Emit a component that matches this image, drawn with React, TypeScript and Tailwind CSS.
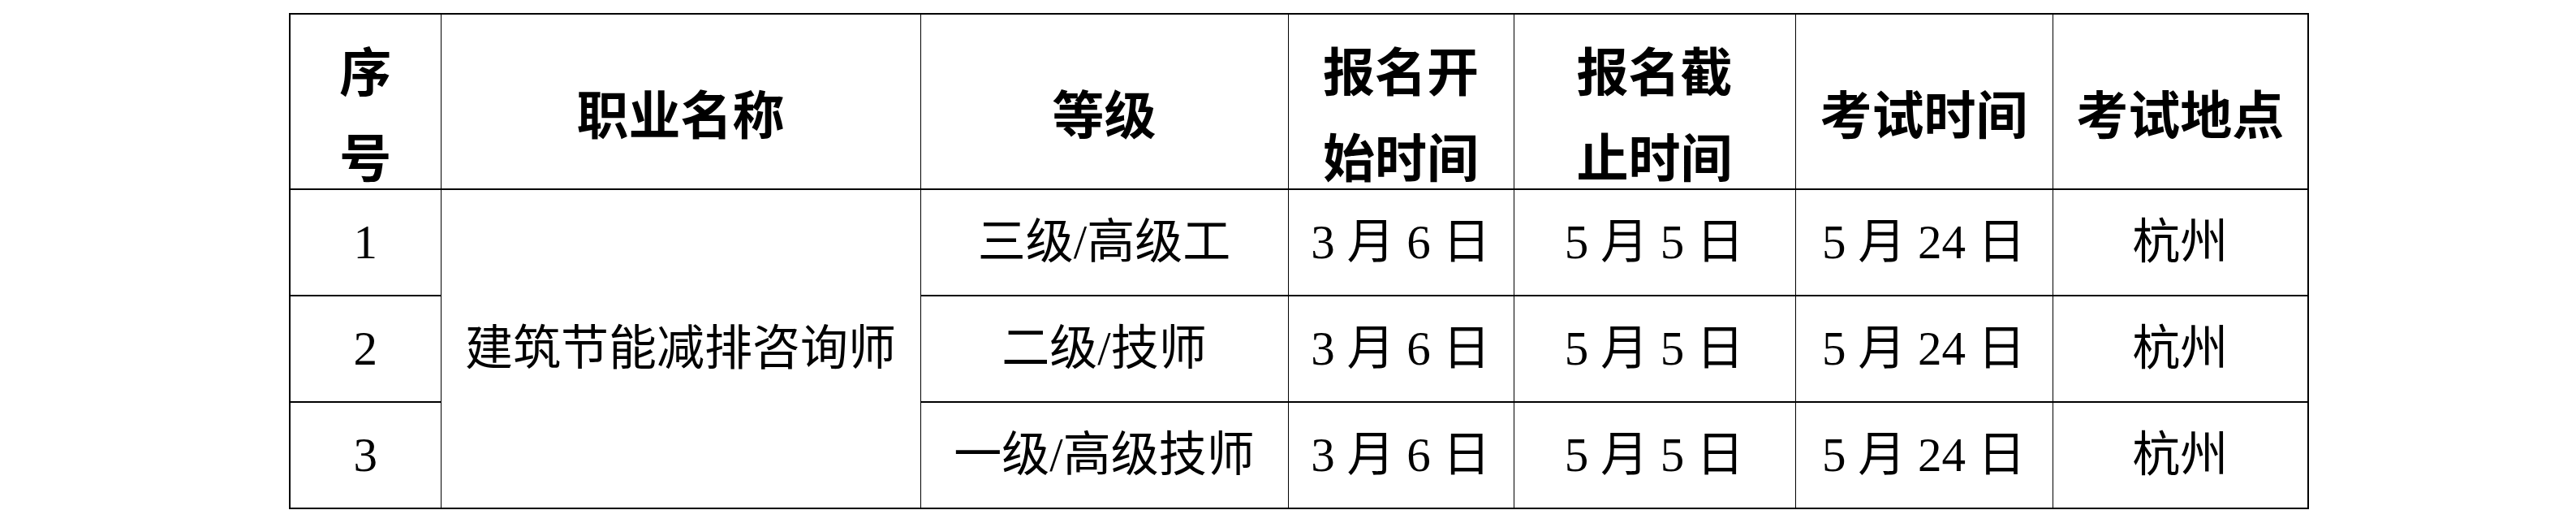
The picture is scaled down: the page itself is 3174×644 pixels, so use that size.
import React from 'react';

// 报名考试安排表
const HEAD_FONT = '[font-family:"Noto_Sans_CJK_SC","Liberation_Sans",sans-serif]';

const rows = [
  { no: '1', level: '三级/高级工', start: '3 月 6 日', end: '5 月 5 日', exam: '5 月 24 日', place: '杭州' },
  { no: '2', level: '二级/技师', start: '3 月 6 日', end: '5 月 5 日', exam: '5 月 24 日', place: '杭州' },
  { no: '3', level: '一级/高级技师', start: '3 月 6 日', end: '5 月 5 日', exam: '5 月 24 日', place: '杭州' },
];

const th = `border-x border-y-2 border-black p-0 text-center align-middle font-bold text-[64px] leading-[106px] ${HEAD_FONT}`;
const td = 'border-x border-y-2 border-black p-0 text-center align-middle text-[59px] leading-none';

function Head({ children }: { children: React.ReactNode }) {
  return (
    <th className={th}>
      <div className="translate-y-[12px]">{children}</div>
    </th>
  );
}

export default function App() {
  return (
    <div className="bg-white w-[3174px] h-[644px] pt-[16px] pl-[356px] text-black">
      <table
        className="table-fixed border-collapse border-2 border-black [font-family:'Liberation_Serif','Noto_Sans_CJK_SC',serif]"
      >
        <colgroup>
          <col className="w-[186px]" />
          <col className="w-[591px]" />
          <col className="w-[453px]" />
          <col className="w-[278px]" />
          <col className="w-[347px]" />
          <col className="w-[317px]" />
          <col className="w-[315px]" />
        </colgroup>
        <thead>
          <tr className="h-[216px]">
            <Head>序<br />号</Head>
            <Head>职业名称</Head>
            <Head>等级</Head>
            <Head>报名开<br />始时间</Head>
            <Head>报名截<br />止时间</Head>
            <Head>考试时间</Head>
            <Head>考试地点</Head>
          </tr>
        </thead>
        <tbody>
          {rows.map((r, i) => (
            <tr key={r.no} className="h-[131px]">
              <td className={td}>{r.no}</td>
              {i === 0 && (
                <td rowSpan={3} className={td}>建筑节能减排咨询师</td>
              )}
              <td className={td}>{r.level}</td>
              <td className={td}>{r.start}</td>
              <td className={td}>{r.end}</td>
              <td className={td}>{r.exam}</td>
              <td className={td}>{r.place}</td>
            </tr>
          ))}
        </tbody>
      </table>
    </div>
  );
}
